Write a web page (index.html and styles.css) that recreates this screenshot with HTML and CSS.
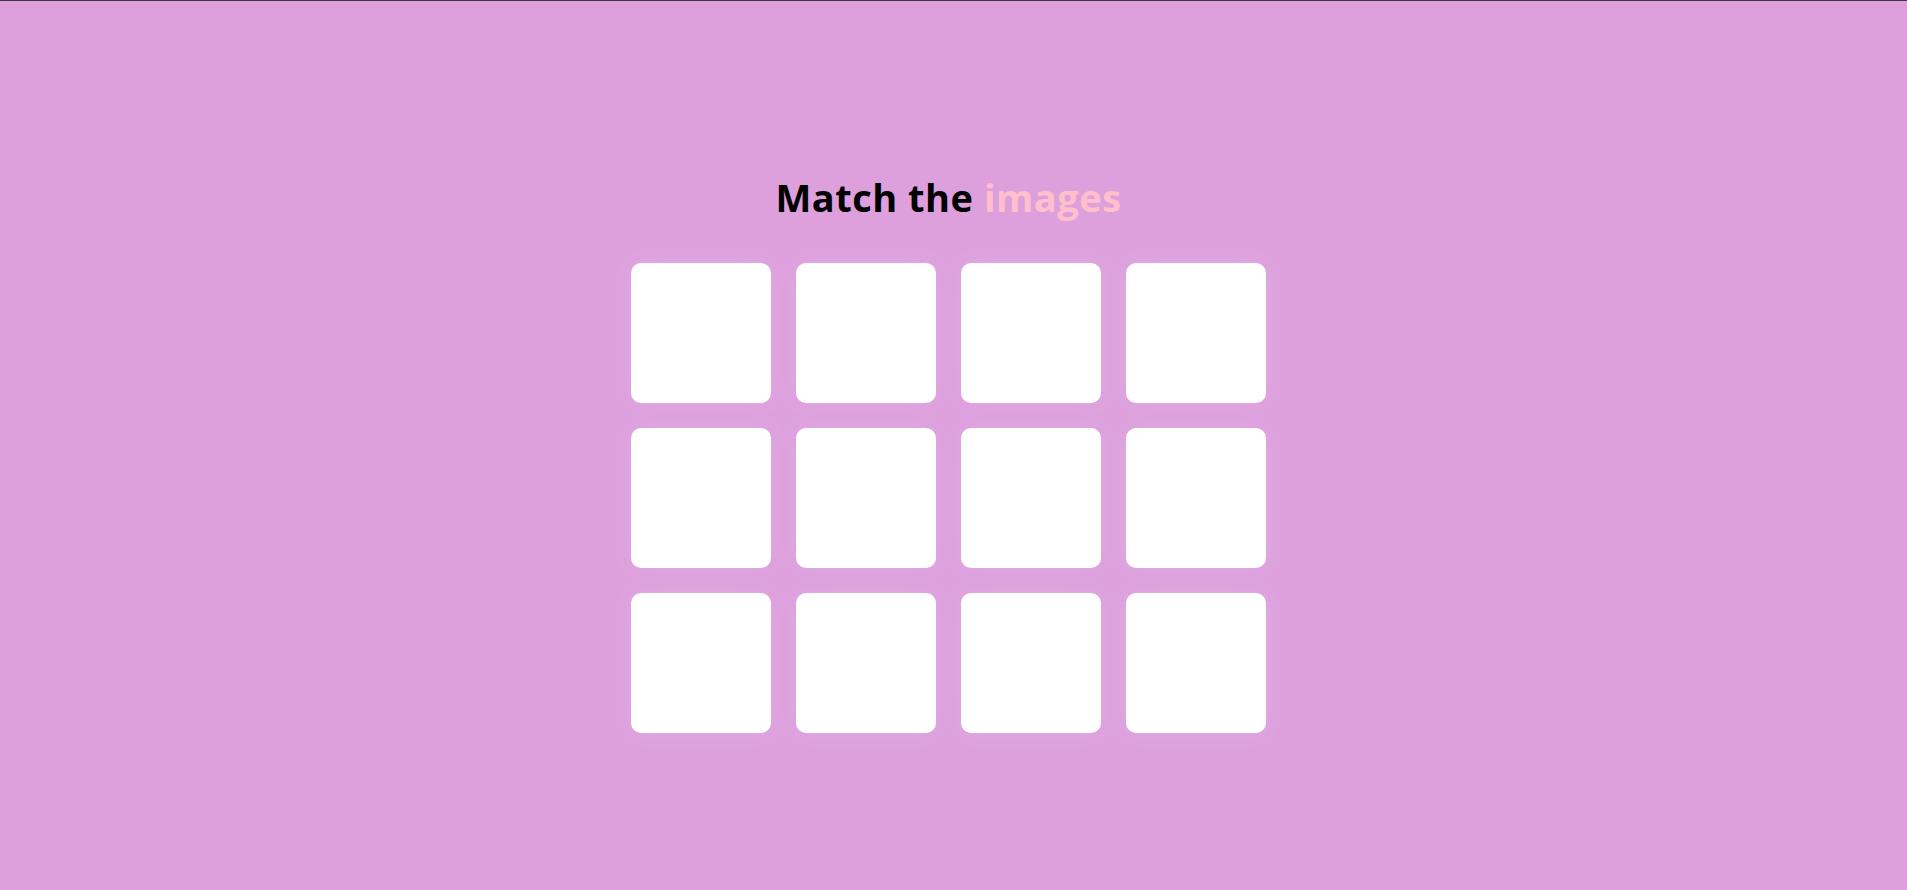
FILE: index.html
```html
<!DOCTYPE html>
<html lang="en">
<head>
<meta charset="utf-8">
<title>Match the images</title>
<link rel="stylesheet" href="styles.css">
</head>
<body>
<main class="game">
  <h1 class="title">Match the <span class="accent">images</span></h1>
  <div class="board">
    <div class="card"></div><div class="card"></div><div class="card"></div><div class="card"></div>
    <div class="card"></div><div class="card"></div><div class="card"></div><div class="card"></div>
    <div class="card"></div><div class="card"></div><div class="card"></div><div class="card"></div>
  </div>
</main>
</body>
</html>
```
FILE: styles.css
```css
html, body {
  margin: 0;
  padding: 0;
}
body {
  background: #dda0dd;
  border-top: 1px solid #3a3a3a;
  min-height: 889px;
  box-sizing: border-box;
}
.game {
  display: flex;
  flex-direction: column;
  align-items: center;
  padding-top: 168px;
  padding-right: 10px;
}
.title {
  margin: 0 0 38px;
  font-family: "Comic Sans MS", "Open Sans", sans-serif;
  font-weight: 700;
  font-size: 38px;
  line-height: 56px;
  color: #000;
  letter-spacing: 0.5px;
}
.accent {
  color: #ffc0cb;
}
.board {
  display: grid;
  grid-template-columns: repeat(4, 140px);
  grid-auto-rows: 140px;
  gap: 25px;
}
.card {
  background: #fff;
  border-radius: 10px;
  box-shadow: 0 0 24px rgba(255, 255, 255, 0.12);
}
```
